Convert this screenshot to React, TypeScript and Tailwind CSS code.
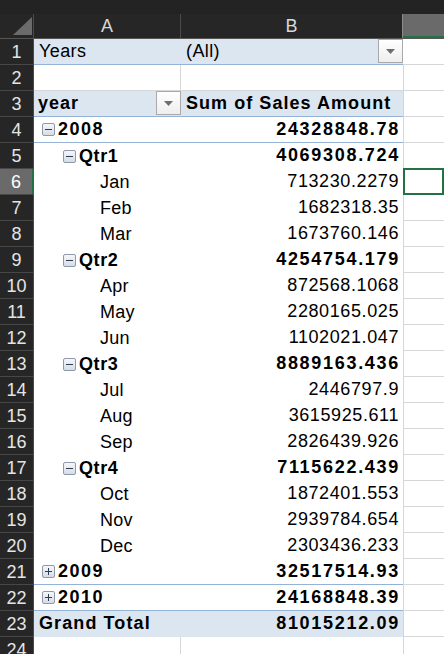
import React from "react";

type Row = {
  n: number;
  kind: "year" | "qtr" | "month";
  label: string;
  value: string;
  sign?: "minus" | "plus";
  line?: boolean;
};

const rows: Row[] = [
  { n: 4, kind: "year", label: "2008", value: "24328848.78", sign: "minus", line: true },
  { n: 5, kind: "qtr", label: "Qtr1", value: "4069308.724", sign: "minus" },
  { n: 6, kind: "month", label: "Jan", value: "713230.2279" },
  { n: 7, kind: "month", label: "Feb", value: "1682318.35" },
  { n: 8, kind: "month", label: "Mar", value: "1673760.146" },
  { n: 9, kind: "qtr", label: "Qtr2", value: "4254754.179", sign: "minus" },
  { n: 10, kind: "month", label: "Apr", value: "872568.1068" },
  { n: 11, kind: "month", label: "May", value: "2280165.025" },
  { n: 12, kind: "month", label: "Jun", value: "1102021.047" },
  { n: 13, kind: "qtr", label: "Qtr3", value: "8889163.436", sign: "minus" },
  { n: 14, kind: "month", label: "Jul", value: "2446797.9" },
  { n: 15, kind: "month", label: "Aug", value: "3615925.611" },
  { n: 16, kind: "month", label: "Sep", value: "2826439.926" },
  { n: 17, kind: "qtr", label: "Qtr4", value: "7115622.439", sign: "minus" },
  { n: 18, kind: "month", label: "Oct", value: "1872401.553" },
  { n: 19, kind: "month", label: "Nov", value: "2939784.654" },
  { n: 20, kind: "month", label: "Dec", value: "2303436.233" },
  { n: 21, kind: "year", label: "2009", value: "32517514.93", sign: "plus", line: true },
  { n: 22, kind: "year", label: "2010", value: "24168848.39", sign: "plus", line: true },
];

function ToggleBox({ sign }: { sign: "minus" | "plus" }) {
  return (
    <svg width="13" height="13" viewBox="0 0 13 13" className="shrink-0">
      <defs>
        <linearGradient id="tbg" x1="0" y1="0" x2="0" y2="1">
          <stop offset="0" stopColor="#f7f8fa" />
          <stop offset="1" stopColor="#d5dbe4" />
        </linearGradient>
      </defs>
      <rect x="0.5" y="0.5" width="12" height="12" rx="1.5" fill="url(#tbg)" stroke="#8e9aab" />
      <line x1="3" y1="6.5" x2="10" y2="6.5" stroke="#2f3d52" strokeWidth="1" />
      {sign === "plus" && <line x1="6.5" y1="3" x2="6.5" y2="10" stroke="#2f3d52" strokeWidth="1" />}
    </svg>
  );
}

function DropBtn() {
  return (
    <div className="w-[25px] h-[24px] shrink-0 border border-[#a9a9a9] bg-gradient-to-b from-white to-[#eeeeee] flex items-center justify-center">
      <svg width="9" height="5" viewBox="0 0 9 5">
        <polygon points="0,0 9,0 4.5,5" fill="#6e6e6e" />
      </svg>
    </div>
  );
}

function RowHead({ n, selected }: { n: number; selected?: boolean }) {
  return (
    <div
      className={
        "w-[34px] shrink-0 h-[26px] border-b border-[#474747] flex items-center justify-center text-[18px] leading-none " +
        (selected
          ? "bg-[#6a6a6a] text-white border-r-2 border-r-[#217346]"
          : "bg-[#262626] text-[#e4e4e4] border-r border-r-[#4a4a4a]")
      }
    >
      {n}
    </div>
  );
}

function CellC({ selected }: { selected?: boolean }) {
  return (
    <div className="flex-1 h-[26px] border-b border-[#d6d6d6] relative">
      {selected && <div className="absolute -left-[1px] -top-[1px] right-0 -bottom-[1px] border-2 border-[#217346]" />}
    </div>
  );
}

export default function App() {
  return (
    <div className="w-[444px] h-[654px] overflow-hidden bg-white font-['Liberation_Sans',Arial,sans-serif] text-[18px] text-black">
      <div className="h-[14px] bg-[#232323]" />
      <div className="flex h-[25px] bg-[#262626] border-b border-[#555555]">
        <div className="w-[34px] shrink-0 border-r border-[#4a4a4a] relative">
          <svg width="34" height="24" viewBox="0 0 34 24" className="absolute left-0 top-0">
            <polygon points="32,3 32,21 13,21" fill="#6b6b6b" />
          </svg>
        </div>
        <div className="w-[147px] shrink-0 border-r border-[#4a4a4a] flex items-center justify-center text-[#d8d8d8]">A</div>
        <div className="w-[222px] shrink-0 border-r border-[#8a8a8a] flex items-center justify-center text-[#d8d8d8]">B</div>
        <div className="flex-1 bg-[#6a6a6a] border-b-2 border-[#217346]" />
      </div>

      {/* Row 1 */}
      <div className="flex">
        <RowHead n={1} />
        <div className="w-[369px] shrink-0 h-[26px] bg-[#dce6f1] border-b border-[#95b3d7] flex tracking-[0.4px]">
          <div className="w-[147px] shrink-0 pl-[5px] leading-[25px]">Years</div>
          <div className="flex-1 pl-[5px] leading-[25px]">(All)</div>
          <div><DropBtn /></div>
        </div>
        <CellC />
      </div>

      {/* Row 2 */}
      <div className="flex">
        <RowHead n={2} />
        <div className="w-[147px] shrink-0 h-[26px] border-r border-b border-[#d6d6d6]" />
        <div className="w-[222px] shrink-0 h-[26px] border-b border-[#d6d6d6]" />
        <div className="w-px bg-[#d6d6d6]" />
        <CellC />
      </div>

      {/* Row 3 */}
      <div className="flex">
        <RowHead n={3} />
        <div className="w-[369px] shrink-0 h-[26px] bg-[#dce6f1] border-b border-[#95b3d7] flex font-bold">
          <div className="w-[147px] shrink-0 flex">
            <div className="flex-1 pl-[4px] leading-[25px] tracking-[1px]">year</div>
            <DropBtn />
          </div>
          <div className="flex-1 pl-[5px] leading-[25px] whitespace-nowrap tracking-[1.05px]">Sum of Sales Amount</div>
        </div>
        <div className="w-px bg-[#d6d6d6]" />
        <CellC />
      </div>

      {rows.map((r) => {
        const bold = r.kind !== "month";
        return (
          <div className="flex" key={r.n}>
            <RowHead n={r.n} selected={r.n === 6} />
            <div
              className={
                "w-[369px] shrink-0 h-[26px] flex " +
                (r.line ? "border-b border-[#95b3d7]" : "") +
                (bold ? " font-bold" : "")
              }
            >
              <div
                className={
                  "w-[147px] shrink-0 flex items-center whitespace-nowrap " +
                  (r.kind === "year" ? "pl-[8px]" : r.kind === "qtr" ? "pl-[29px]" : "pl-[66px]")
                }
              >
                {r.sign && <ToggleBox sign={r.sign} />}
                <span
                  className={
                    "leading-[25px] " +
                    (r.sign ? "pl-[3px] " : "") +
                    (r.kind === "year" ? "tracking-[1.5px]" : r.kind === "qtr" ? "tracking-[0.6px]" : "tracking-[0.3px]")
                  }
                >
                  {r.label}
                </span>
              </div>
              <div
                className={
                  "flex-1 text-right leading-[25px] " +
                  (bold ? "tracking-[1.7px] pr-[3px]" : "tracking-[0.6px] pr-[4px]")
                }
              >
                {r.value}
              </div>
            </div>
            <div className="w-px bg-[#d6d6d6]" />
            <CellC selected={r.n === 6} />
          </div>
        );
      })}

      {/* Row 23 */}
      <div className="flex">
        <RowHead n={23} />
        <div className="w-[369px] shrink-0 h-[26px] bg-[#dce6f1] flex font-bold">
          <div className="w-[147px] shrink-0 pl-[5px] leading-[25px] whitespace-nowrap tracking-[1.1px]">Grand Total</div>
          <div className="flex-1 text-right pr-[3px] leading-[25px] tracking-[1.7px]">81015212.09</div>
        </div>
        <div className="w-px bg-[#d6d6d6]" />
        <CellC />
      </div>

      {/* Row 24 */}
      <div className="flex">
        <RowHead n={24} />
        <div className="w-[147px] shrink-0 h-[26px] border-r border-b border-[#d6d6d6]" />
        <div className="w-[222px] shrink-0 h-[26px] border-b border-[#d6d6d6]" />
        <div className="w-px bg-[#d6d6d6]" />
        <CellC />
      </div>
    </div>
  );
}
